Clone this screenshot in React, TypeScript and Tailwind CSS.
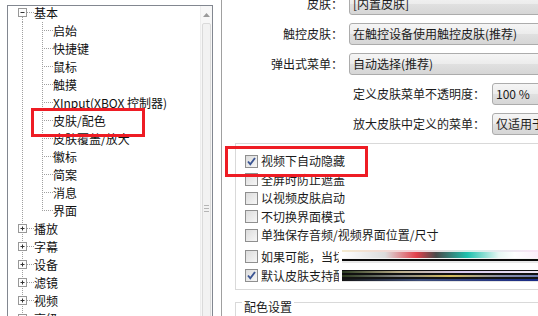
import React from "react";

// 树节点
type Node = {
  label: string;
  kind: "root" | "child";
  open?: boolean;
  first?: boolean;
  last?: boolean;
};

const tree: Node[] = [
  { label: "基本", kind: "root", open: true, first: true },
  { label: "启始", kind: "child" },
  { label: "快捷键", kind: "child" },
  { label: "鼠标", kind: "child" },
  { label: "触摸", kind: "child" },
  { label: "XInput(XBOX 控制器)", kind: "child" },
  { label: "皮肤/配色", kind: "child" },
  { label: "皮肤覆盖/放大", kind: "child" },
  { label: "徽标", kind: "child" },
  { label: "简案", kind: "child" },
  { label: "消息", kind: "child" },
  { label: "界面", kind: "child", last: true },
  { label: "播放", kind: "root" },
  { label: "字幕", kind: "root" },
  { label: "设备", kind: "root" },
  { label: "滤镜", kind: "root" },
  { label: "视频", kind: "root" },
  { label: "高级", kind: "root" },
];

const font = { fontFamily: '"Noto Sans CJK SC", "Noto Sans", sans-serif' };

const dot = { stroke: "#a0a0a0", strokeDasharray: "1 1", strokeWidth: 1 };

const Connector = ({ node }: { node: Node }) =>
  node.kind === "root" ? (
    <svg width="26" height="18" className="shrink-0">
      <line x1="14.5" y1={node.first ? 13 : 0} x2="14.5" y2="18" {...dot} />
      <line x1="19" y1="8.5" x2="26" y2="8.5" {...dot} />
      <rect x="10.5" y="4.5" width="8" height="8" fill="#fdfdfd" stroke="#989898" />
      <line x1="12.5" y1="8.5" x2="16.5" y2="8.5" stroke="#333" />
      {!node.open && <line x1="14.5" y1="6.5" x2="14.5" y2="10.5" stroke="#333" />}
    </svg>
  ) : (
    <svg width="45" height="18" className="shrink-0">
      <line x1="14.5" y1="0" x2="14.5" y2="18" {...dot} />
      <line x1="34.5" y1="0" x2="34.5" y2={node.last ? 9 : 18} {...dot} />
      <line x1="36" y1="8.5" x2="45" y2="8.5" {...dot} />
    </svg>
  );

const Combo = ({ text }: { text: string }) => (
  <div className="h-[22px] w-[260px] shrink-0 rounded-[3px] border border-[#acacac] bg-[linear-gradient(#f5f5f5_0%,#ececec_50%,#e0e0e0_51%,#d6d6d6_100%)] pl-[3px] text-[12px] leading-[20px] text-[#1b1b1b]">
    {text}
  </div>
);

const Check = ({ checked }: { checked?: boolean }) => (
  <div className="flex h-[13px] w-[13px] shrink-0 items-center justify-center border border-[#8f8f8f] bg-[linear-gradient(135deg,#dcdcdc,#f6f6f6)]">
    {checked && (
      <svg width="11" height="11" viewBox="0 0 11 11">
        <path d="M2 5.5 L4.3 8.3 L9 2" fill="none" stroke="#3b5593" strokeWidth="1.9" />
      </svg>
    )}
  </div>
);

const CheckRow = ({ label, checked, h }: { label: string; checked?: boolean; h: string }) => (
  <div className={`flex items-center gap-[3px] ${h}`}>
    <Check checked={checked} />
    <span className="text-[12px] leading-[16px] text-[#1b1b1b]">{label}</span>
  </div>
);

export default function App() {
  return (
    <div className="relative flex h-[316px] w-[538px] overflow-hidden bg-white" style={font}>
      {/* 左侧树 */}
      <div className="w-[213px] shrink-0 pl-[7px] pt-[5px]">
        <div className="flex h-[330px] w-[206px] border border-[#828790]">
          <div className="-mt-[2px] flex-1 overflow-hidden">
            {tree.map((n) => (
              <div key={n.label} className="flex h-[18px] items-center">
                <Connector node={n} />
                <span className="whitespace-nowrap text-[12px] leading-[18px] text-[#111]">{n.label}</span>
              </div>
            ))}
          </div>
          <div className="flex w-[12px] shrink-0 flex-col border-l border-[#ededed] bg-[#f7f7f7]">
            <div className="flex h-[17px] shrink-0 items-center justify-center">
              <svg width="7" height="4" viewBox="0 0 7 4">
                <path d="M0 4 L3.5 0 L7 4 Z" fill="#9a9a9a" />
              </svg>
            </div>
            <div className="mx-[1px] flex h-[370px] shrink-0 flex-col items-center justify-center gap-[2px] rounded-[2px] border border-[#dadada] bg-[#f2f2f2]">
              <div className="h-px w-[5px] bg-[#b5b5b5]" />
              <div className="h-px w-[5px] bg-[#b5b5b5]" />
              <div className="h-px w-[5px] bg-[#b5b5b5]" />
            </div>
          </div>
        </div>
      </div>

      {/* 右侧设置 */}
      <div className="ml-[8px] min-w-0 flex-1 overflow-hidden border-l border-[#a0a0a0] text-[#1b1b1b]">
        <div className="-mt-[7px] flex flex-col gap-[8px]">
          {[
            ["皮肤：", "[内置皮肤]"],
            ["触控皮肤：", "在触控设备使用触控皮肤(推荐)"],
            ["弹出式菜单：", "自动选择(推荐)"],
          ].map(([l, v]) => (
            <div key={l} className="flex items-center gap-[6px]">
              <span className="w-[121px] shrink-0 text-right text-[12px] leading-[16px]">{l}</span>
              <Combo text={v} />
            </div>
          ))}
          {[
            ["定义皮肤菜单不透明度：", "100 %"],
            ["放大皮肤中定义的菜单：", "仅适用于弹出式菜单"],
          ].map(([l, v]) => (
            <div key={l} className="flex items-center gap-[7px]">
              <span className="w-[263px] shrink-0 text-right text-[12px] leading-[16px]">{l}</span>
              <Combo text={v} />
            </div>
          ))}
        </div>

        {/* 分组 1 */}
        <div className="ml-[13px] mt-[8px] h-[147px] border-b border-l border-t border-[#d9d9d9] pl-[9px] pt-[8px]">
          <CheckRow label="视频下自动隐藏" checked h="h-[18px]" />
          <CheckRow label="全屏时防止遮盖" h="h-[19px]" />
          <CheckRow label="以视频皮肤启动" h="h-[18px]" />
          <CheckRow label="不切换界面模式" h="h-[19px]" />
          <CheckRow label="单独保存音频/视频界面位置/尺寸" h="h-[18px]" />
          <div className="mt-[3px] flex h-[19px] items-center gap-[3px]">
            <Check />
            <span className="w-[78px] shrink-0 overflow-hidden whitespace-nowrap text-[12px] leading-[16px]">如果可能，当切换</span>
            <div className="flex h-[13px] flex-1 flex-col">
              <div className="h-[2px] bg-[linear-gradient(90deg,#f3ead0,#f1cfd6_35%,#d6eee8_65%,#fbe4f6)]" />
              <div className="h-[6px] bg-[linear-gradient(90deg,#ffffff_0%,#dcdcdc_22%,#e2404c_38%,#4a4a4a_48%,#1fc2ae_64%,#e6f7f3_80%,#ffffff_88%,#fbeefa_100%)]" />
              <div className="h-[1px] bg-[#f4f4f4]" />
              <div className="h-[2px] bg-[#0a0a0a]" />
              <div className="h-[2px] bg-[#e8e8e8]" />
            </div>
          </div>
          <div className="flex h-[19px] items-center gap-[3px]">
            <Check checked />
            <span className="w-[78px] shrink-0 overflow-hidden whitespace-nowrap text-[12px] leading-[16px]">默认皮肤支持配色</span>
            <div className="flex h-[12px] flex-1 flex-col">
              <div className="h-[1px] bg-[#111]" />
              <div className="h-[2px] bg-[linear-gradient(90deg,#2b3a22,#bdb08c_30%,#d7c8ee_60%,#efe6f4)]" />
              <div className="h-[2px] bg-[#101010]" />
              <div className="h-[2px] bg-[linear-gradient(90deg,#2d3b1e,#8a8a8a_30%,#d6bd5c_55%,#8b8fa8_80%,#6d7bb0)]" />
              <div className="h-[2px] bg-[#141414]" />
              <div className="h-[2px] bg-[linear-gradient(90deg,#151515,#3c4c78_40%,#1a2a86)]" />
              <div className="h-[1px] bg-[#e4e4e4]" />
            </div>
          </div>
        </div>

        {/* 分组 2 */}
        <div className="ml-[13px] mt-[12px] h-[40px] border-l border-t border-[#d9d9d9]">
          <span className="-mt-[4px] ml-[6px] block w-fit bg-white px-[2px] text-[12px] leading-[16px]">配色设置</span>
        </div>
      </div>

      {/* 红框标注 */}
      <div className="absolute left-[31px] top-[108px] h-[29px] w-[114px] border-[3px] border-[#ee1c24]" />
      <div className="absolute left-[225px] top-[146px] h-[31px] w-[143px] border-[3px] border-[#ee1c24]" />
    </div>
  );
}
